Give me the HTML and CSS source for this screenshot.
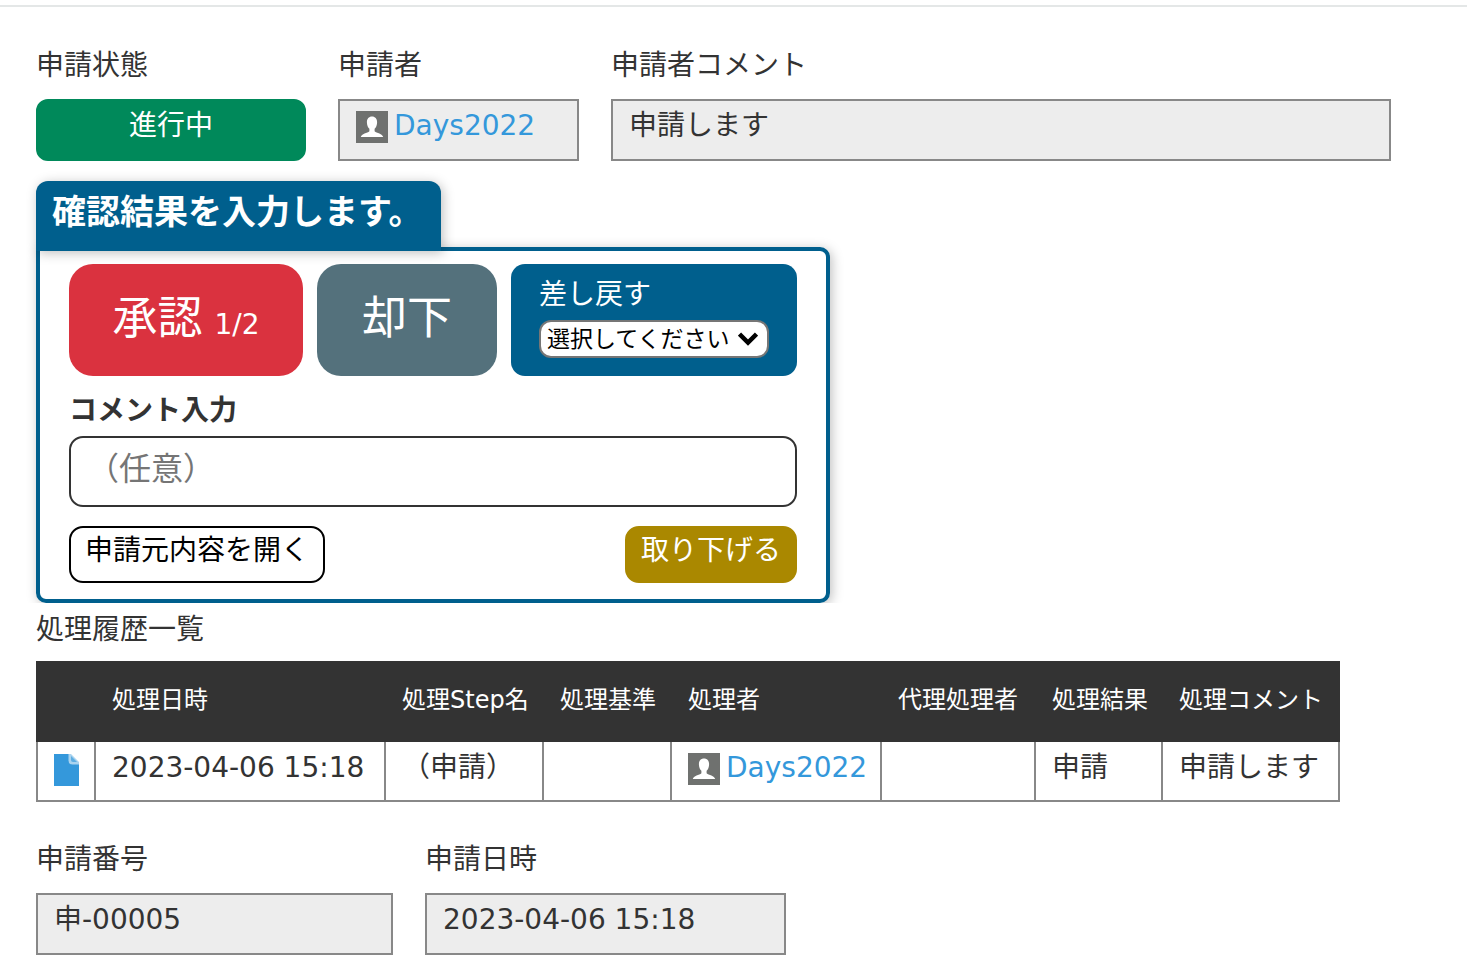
FILE: index.html
```html
<!DOCTYPE html>
<html lang="ja">
<head>
<meta charset="UTF-8">
<meta name="viewport" content="width=device-width, initial-scale=1.0">
<title>申請状態</title>
<link rel="stylesheet" href="styles.css">
</head>
<body>

<svg class="defs" aria-hidden="true">
    <symbol id="icon-user" viewBox="0 0 32 32">
        <rect width="32" height="32" fill="#6f716f"/>
        <path d="M16 5.500c3.200 0 5.100 2.300 5.100 5.700 0 3-1.100 5.200-2.500 6.600v2.400c2 1.800 8 2.400 8.600 5.800H4.800c.6-3.400 6.600-4 8.600-5.800v-2.400c-1.400-1.400-2.500-3.600-2.500-6.600 0-3.400 1.900-5.700 5.100-5.700z" fill="#fff"/>
    </symbol>
</svg>

<main class="page">
    <div class="fields fields-top">
        <div class="field">
            <div class="label">申請状態</div>
            <div class="status">進行中</div>
        </div>
        <div class="field">
            <div class="label">申請者</div>
            <div class="value"><svg class="icon-user"><use href="#icon-user"/></svg><a href="#">Days2022</a></div>
        </div>
        <div class="field">
            <div class="label">申請者コメント</div>
            <div class="value">申請します</div>
        </div>
    </div>

    <form class="confirm">
        <h2 class="confirm-title">確認結果を入力します。</h2>
        <div class="confirm-body">
            <div class="actions">
                <button type="button" class="btn-approve">承認<small>1/2</small></button>
                <button type="button" class="btn-reject">却下</button>
                <div class="remand">
                    <label for="remand">差し戻す</label>
                    <div class="select">
                        <select id="remand">
                            <option>選択してください</option>
                        </select>
                        <svg class="chevron" viewBox="0 0 20 14"><path d="M1.500 2l8.500 8.500L18.500 2" fill="none" stroke="#000" stroke-width="4.500"/></svg>
                    </div>
                </div>
            </div>
            <label class="comment-label" for="comment">コメント入力</label>
            <input type="text" class="comment" id="comment" placeholder="（任意）">
            <div class="links">
                <button type="button" class="btn-open">申請元内容を開く</button>
                <button type="button" class="btn-withdraw">取り下げる</button>
            </div>
        </div>
    </form>

    <h3 class="history-title">処理履歴一覧</h3>
    <table class="history">
        <colgroup>
            <col class="col-icon">
            <col class="col-date">
            <col class="col-step">
            <col class="col-rule">
            <col class="col-user">
            <col class="col-proxy">
            <col class="col-result">
            <col class="col-comment">
        </colgroup>
        <thead>
            <tr>
                <th></th>
                <th>処理日時</th>
                <th>処理Step名</th>
                <th>処理基準</th>
                <th>処理者</th>
                <th>代理処理者</th>
                <th>処理結果</th>
                <th>処理コメント</th>
            </tr>
        </thead>
        <tbody>
            <tr>
                <td><a href="#" aria-label="詳細"><svg class="icon-doc" viewBox="0 0 25 32"><path d="M0 0h16l9 9v23H0z" fill="#3498db"/><path d="M14.500 0H17l8 8v2.500h-6.500q-4 0-4-4z" fill="#a9d3ef"/><path d="M17 2l6 6h-4q-2 0-2-2z" fill="#5dade2"/></svg></a></td>
                <td>2023-04-06 15:18</td>
                <td>（申請）</td>
                <td></td>
                <td><svg class="icon-user"><use href="#icon-user"/></svg><a href="#">Days2022</a></td>
                <td></td>
                <td>申請</td>
                <td>申請します</td>
            </tr>
        </tbody>
    </table>

    <div class="fields fields-bottom">
        <div class="field">
            <div class="label">申請番号</div>
            <div class="value">申-00005</div>
        </div>
        <div class="field">
            <div class="label">申請日時</div>
            <div class="value">2023-04-06 15:18</div>
        </div>
    </div>
</main>

</body>
</html>
```
FILE: styles.css
```css
* {
    box-sizing: border-box;
}
body {
    margin: 0;
    padding-top: 5px;
    background: #fff;
    color: #333;
    font-family: "DejaVu Sans", "Noto Sans CJK JP", sans-serif;
    font-size: 28px;
    line-height: 42px;
}
a {
    color: #3498db;
    text-decoration: none;
}
button, input, select {
    margin: 0;
    font-family: inherit;
}
button {
    cursor: pointer;
}
.defs {
    position: absolute;
    width: 0;
    height: 0;
}
.page {
    border-top: 2px solid #e4e7e7;
    padding: 38px 76px 22px 36px;
}

/* fields */
.fields {
    display: grid;
    gap: 32px;
}
.fields-top {
    grid-template-columns: 270px 241px 1fr;
}
.fields-bottom {
    grid-template-columns: 357px 361px;
    margin-top: 37px;
}
.label {
    margin-bottom: 12px;
}
.status, .value {
    height: 62px;
    line-height: 50px;
}
.status {
    border: 2px solid #00895a;
    border-radius: 12px;
    background: #00895a;
    color: #fff;
    text-align: center;
}
.value {
    padding: 0 16px;
    border: 2px solid #888;
    background: #ededed;
}
.icon-user {
    width: 32px;
    height: 32px;
    margin-right: 6px;
    vertical-align: middle;
}

/* confirm panel */
.confirm {
    max-width: 794px;
    margin-top: 20px;
    clip-path: inset(-20px -20px 0 -20px);
}
.confirm-title {
    position: relative;
    width: fit-content;
    margin: 0 0 -4px;
    padding: 7px 18px 15px 16px;
    border-radius: 12px 12px 0 0;
    background: #005f8d;
    box-shadow: 2px 2px 12px rgba(0, 0, 0, 0.25);
    color: #fff;
    font-size: 34px;
    line-height: 48px;
}
.confirm-body {
    padding: 13px 29px 16px;
    border: 4px solid #005f8d;
    border-radius: 0 10px 10px 10px;
    box-shadow: 2px 2px 12px rgba(0, 0, 0, 0.25);
}
.actions {
    display: grid;
    grid-template-columns: 234px 180px 1fr;
    gap: 14px;
}
.btn-approve, .btn-reject {
    height: 112px;
    padding: 0 0 12px;
    border: 0;
    border-radius: 24px;
    color: #fff;
    font-size: 45px;
}
.btn-approve {
    background: #da323f;
}
.btn-approve small {
    margin-left: 12px;
    font-size: 28px;
}
.btn-reject {
    background: #54717c;
}
.remand {
    padding: 10px 28px;
    border-radius: 14px;
    background: #005f8d;
    color: #fff;
}
.remand label {
    display: block;
    margin-bottom: 4px;
}
.select {
    position: relative;
}
.select select {
    display: block;
    width: 100%;
    height: 38px;
    padding: 0 6px;
    border: 2px solid #767676;
    border-radius: 12px;
    background: #fff;
    color: #000;
    font-size: 23px;
    appearance: none;
}
.chevron {
    position: absolute;
    top: 12px;
    right: 11px;
    width: 20px;
    height: 14px;
    pointer-events: none;
}
.comment-label {
    display: block;
    margin: 14px 0 4px;
    font-weight: bold;
}
.comment {
    display: block;
    width: 100%;
    height: 71px;
    padding: 0 16px 6px;
    border: 2px solid #333;
    border-radius: 14px;
    color: #333;
    font-size: 32px;
}
.comment::placeholder {
    color: #757575;
    opacity: 1;
}
.links {
    display: flex;
    justify-content: space-between;
    margin-top: 19px;
}
.btn-open, .btn-withdraw {
    height: 57px;
    padding: 0 14px 16px;
    border: 2px solid #000;
    border-radius: 14px;
    background: #fff;
    color: #000;
    font-size: 28px;
}
.btn-withdraw {
    border-color: #a80;
    background: #a80;
    color: #fff;
}

/* history */
.history-title {
    margin: 6px 0 10px;
    font-size: 28px;
    font-weight: normal;
}
.history {
    border-collapse: collapse;
    white-space: nowrap;
}
.history th {
    height: 79px;
    padding: 0 12px 4px 16px;
    border: 2px solid #333;
    background: #333;
    color: #fff;
    font-size: 24px;
    font-weight: normal;
    text-align: left;
}
.history td {
    height: 60px;
    padding: 0 12px 6px 16px;
    border: 2px solid #888;
    border-top-color: #333;
}
.icon-doc {
    display: block;
    width: 25px;
    height: 32px;
    margin-top: 4px;
}
.col-icon { width: 58px; }
.col-date { width: 290px; }
.col-step { width: 158px; }
.col-rule { width: 128px; }
.col-user { width: 210px; }
.col-proxy { width: 154px; }
.col-result { width: 127px; }
.col-comment { width: 177px; }
```
